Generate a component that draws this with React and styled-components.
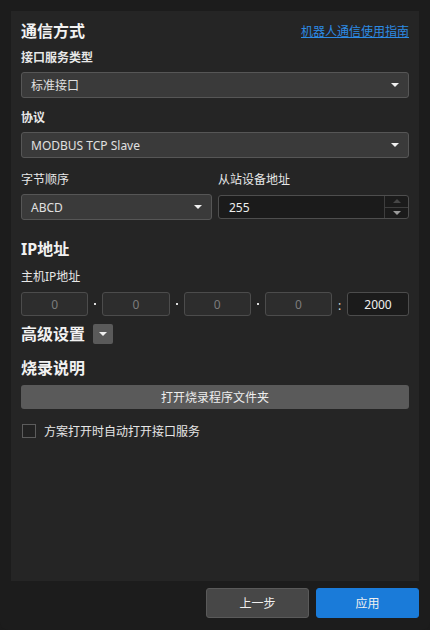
import React from "react";
import styled, { createGlobalStyle } from "styled-components";

const App = () => {
  return (
    <>
      <GlobalStyle />
      <Window>
        <Panel>
          <HeaderRow>
            <Title>通信方式</Title>
            <GuideLink href="#">机器人通信使用指南</GuideLink>
          </HeaderRow>

          <Label $bold $mt={6}>接口服务类型</Label>
          <Select $mt={5}>
            <span>标准接口</span>
            <Caret />
          </Select>

          <Label $bold $mt={11}>协议</Label>
          <Select $mt={5}>
            <span>MODBUS TCP Slave</span>
            <Caret />
          </Select>

          <TwoCol $mt={13}>
            <Field>
              <Label>字节顺序</Label>
              <Select $mt={5}>
                <span>ABCD</span>
                <Caret />
              </Select>
            </Field>
            <Field>
              <Label>从站设备地址</Label>
              <Spinner>
                <SpinValue>255</SpinValue>
                <SpinButtons>
                  <SpinBtn>
                    <Caret $up $dim />
                  </SpinBtn>
                  <SpinBtn $bottom>
                    <Caret $grey />
                  </SpinBtn>
                </SpinButtons>
              </Spinner>
            </Field>
          </TwoCol>

          <Section $mt={17}>IP地址</Section>
          <Label $mt={7}>主机IP地址</Label>
          <IpRow>
            <IpBox>0</IpBox>
            <Dot />
            <IpBox>0</IpBox>
            <Dot />
            <IpBox>0</IpBox>
            <Dot />
            <IpBox>0</IpBox>
            <Colon>:</Colon>
            <IpBox $port>2000</IpBox>
          </IpRow>

          <AdvRow>
            <Section>高级设置</Section>
            <ToggleBtn>
              <Caret />
            </ToggleBtn>
          </AdvRow>

          <Section $mt={10}>烧录说明</Section>
          <WideButton>打开烧录程序文件夹</WideButton>

          <CheckRow>
            <CheckBox />
            <span>方案打开时自动打开接口服务</span>
          </CheckRow>
        </Panel>

        <Footer>
          <FooterButton>上一步</FooterButton>
          <FooterButton $primary>应用</FooterButton>
        </Footer>
      </Window>
    </>
  );
};
export default App;

const GlobalStyle = createGlobalStyle`
  html, body {
    margin: 0;
    padding: 0;
    background: #1b1b1b;
  }
  body {
    font-family: "Noto Sans", "Noto Sans CJK SC", sans-serif;
    color: #e6e6e6;
    font-size: 12px;
  }
`;

const Window = styled.div`
  width: 430px;
  height: 630px;
  display: flex;
  flex-direction: column;
  background: #1c1c1c;
  border-radius: 0 0 8px 8px;
  box-sizing: border-box;
  overflow: hidden;
`;

const Panel = styled.div`
  margin: 11px 11px 0;
  height: 570px;
  background: #252525;
  padding: 8px 10px 0;
  box-sizing: border-box;
  display: flex;
  flex-direction: column;
`;

const HeaderRow = styled.div`
  display: flex;
  justify-content: space-between;
  align-items: center;
  height: 24px;
`;

const Title = styled.div`
  font-size: 16px;
  font-weight: 700;
  color: #f2f2f2;
  line-height: 24px;
`;

const GuideLink = styled.a`
  font-size: 12px;
  color: #2d8be4;
  text-decoration: underline;
  line-height: 18px;
  margin-top: 2px;
`;

const Label = styled.div`
  font-size: 12px;
  line-height: 18px;
  font-weight: ${(p) => (p.$bold ? 700 : 400)};
  color: #e8e8e8;
  margin-top: ${(p) => p.$mt || 0}px;
`;

const Section = styled.div`
  font-size: 16px;
  font-weight: 700;
  line-height: 24px;
  color: #f2f2f2;
  margin-top: ${(p) => p.$mt || 0}px;
`;

const Select = styled.div`
  height: 26px;
  box-sizing: border-box;
  margin-top: ${(p) => p.$mt || 0}px;
  background: #3a3a3a;
  border: 1px solid #565656;
  border-radius: 3px;
  display: flex;
  align-items: center;
  justify-content: space-between;
  padding: 0 9px 0 9px;
  color: #e0e0e0;
  font-size: 12px;
`;

const Caret = styled.i`
  width: 0;
  height: 0;
  border-left: 4px solid transparent;
  border-right: 4px solid transparent;
  ${(p) => (p.$up ? "border-bottom" : "border-top")}: 4px solid
    ${(p) => (p.$dim ? "#474747" : p.$grey ? "#9a9a9a" : "#f0f0f0")};
`;

const TwoCol = styled.div`
  display: grid;
  grid-template-columns: 1fr 1fr;
  column-gap: 6px;
  margin-top: ${(p) => p.$mt || 0}px;
`;

const Field = styled.div`
  display: flex;
  flex-direction: column;
`;

const Spinner = styled.div`
  margin-top: 6px;
  height: 24px;
  box-sizing: border-box;
  background: #1b1b1b;
  border: 1px solid #4e4e4e;
  border-radius: 3px;
  display: flex;
`;

const SpinValue = styled.div`
  flex: 1;
  display: flex;
  align-items: center;
  padding-left: 10px;
  color: #eeeeee;
`;

const SpinButtons = styled.div`
  width: 23px;
  border-left: 1px solid #3e3e3e;
  display: flex;
  flex-direction: column;
`;

const SpinBtn = styled.div`
  flex: 1;
  display: flex;
  align-items: center;
  justify-content: center;
  ${(p) => p.$bottom && "border-top: 1px solid #3e3e3e;"}
`;

const IpRow = styled.div`
  margin-top: 6px;
  display: grid;
  grid-template-columns: 1fr 14px 1fr 14px 1fr 14px 1fr 15px 62px;
  height: 24px;
`;

const IpBox = styled.div`
  box-sizing: border-box;
  border: 1px solid #4c4c4c;
  border-radius: 3px;
  background: ${(p) => (p.$port ? "#1b1b1b" : "#2d2d2d")};
  color: ${(p) => (p.$port ? "#f0f0f0" : "#7c7c7c")};
  display: flex;
  align-items: center;
  justify-content: center;
  font-size: 12px;
`;

const Dot = styled.div`
  display: flex;
  align-items: center;
  justify-content: center;

  &::after {
    content: "";
    width: 2px;
    height: 2px;
    background: #dddddd;
  }
`;

const Colon = styled.div`
  display: flex;
  align-items: center;
  justify-content: center;
  color: #dddddd;
  font-size: 12px;
  padding-top: 2px;
`;

const AdvRow = styled.div`
  margin-top: 6px;
  display: flex;
  align-items: center;
  gap: 8px;
`;

const ToggleBtn = styled.div`
  width: 20px;
  height: 20px;
  border-radius: 2px;
  background: #5a5a5a;
  display: flex;
  align-items: center;
  justify-content: center;
`;

const WideButton = styled.div`
  margin-top: 5px;
  height: 24px;
  border-radius: 3px;
  background: #5a5a5a;
  color: #eeeeee;
  display: flex;
  align-items: center;
  justify-content: center;
  font-size: 12px;
`;

const CheckRow = styled.div`
  margin-top: 13px;
  display: flex;
  align-items: center;
  gap: 8px;
  padding-left: 1px;
  height: 18px;
  color: #e6e6e6;
`;

const CheckBox = styled.div`
  width: 14px;
  height: 14px;
  box-sizing: border-box;
  border: 1px solid #5c5c5c;
  background: #222;
`;

const Footer = styled.div`
  display: flex;
  justify-content: flex-end;
  gap: 7px;
  padding: 7px 11px 0;
`;

const FooterButton = styled.div`
  width: 103px;
  height: 30px;
  box-sizing: border-box;
  border-radius: 3px;
  display: flex;
  align-items: center;
  justify-content: center;
  font-size: 12px;
  color: #f0f0f0;
  background: ${(p) => (p.$primary ? "#1a7bd9" : "#474747")};
  border: 1px solid ${(p) => (p.$primary ? "#1a7bd9" : "#5a5a5a")};
`;
